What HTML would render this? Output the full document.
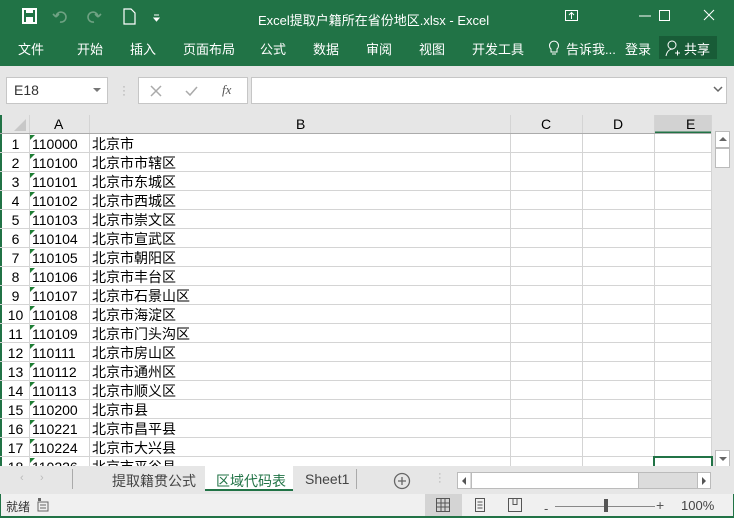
<!DOCTYPE html>
<html><head><meta charset="utf-8"><style>
*{margin:0;padding:0;box-sizing:border-box}
body{width:734px;height:518px;overflow:hidden;background:#e6e6e6;font-family:"Liberation Sans","Noto Sans CJK SC",sans-serif;position:relative}
.a{position:absolute}
.g{background:#217346}
.t{color:#fff;font-size:13px;white-space:nowrap}
.cell{position:absolute;height:19px;font-size:14px;line-height:21px;color:#000;white-space:nowrap;overflow:hidden}
</style></head><body>
<div class="a g" style="left:0;top:0;width:734px;height:66px"></div>
<svg class="a" style="left:20px;top:7px" width="150" height="20">
<rect x="3" y="2" width="13" height="14" fill="none" stroke="#fff" stroke-width="2"/><rect x="6" y="2" width="7" height="4" fill="#fff"/><rect x="6" y="10" width="7" height="6" fill="#fff"/>
<path d="M36 10a5 5 0 1 1 4 5M36 10l-3-3M36 10l3-3" stroke="#6fa283" stroke-width="1.6" fill="none"/>
<path d="M78 10a5 5 0 1 0-4 5M78 10l3-3M78 10l-3-3" stroke="#6fa283" stroke-width="1.6" fill="none"/>
<path d="M104 2h7l4 4v11h-11z" fill="none" stroke="#fff" stroke-width="1.2"/>
<path d="M134 8h5M134 11l2.5 3 2.5-3z" stroke="#fff" fill="#fff"/>
</svg>
<div class="a t" style="left:258px;top:10px">Excel提取户籍所在省份地区.xlsx - Excel</div>
<svg class="a" style="left:560px;top:6px" width="174" height="22" stroke="#fff" fill="none">
<rect x="5.5" y="4.5" width="12" height="10"/><path d="M11.5 13V7M9 9l2.5-2.5L14 9"/>
<path d="M79 10h12"/><rect x="99.5" y="4.5" width="10" height="10"/><path d="M144 4l10 10M154 4l-10 10"/>
</svg>
<div class="a t" style="left:18px;top:39px">文件</div>
<div class="a t" style="left:77px;top:39px">开始</div>
<div class="a t" style="left:130px;top:39px">插入</div>
<div class="a t" style="left:183px;top:39px">页面布局</div>
<div class="a t" style="left:260px;top:39px">公式</div>
<div class="a t" style="left:313px;top:39px">数据</div>
<div class="a t" style="left:366px;top:39px">审阅</div>
<div class="a t" style="left:419px;top:39px">视图</div>
<div class="a t" style="left:472px;top:39px">开发工具</div>
<svg class="a" style="left:548px;top:38px" width="12" height="18" stroke="#fff" fill="none"><path d="M3 11a4.5 4.5 0 1 1 6 0v3H3z"/><path d="M4 16h4"/></svg>
<div class="a t" style="left:566px;top:39px">告诉我...</div>
<div class="a t" style="left:625px;top:39px">登录</div>
<div class="a" style="left:659px;top:36px;width:58px;height:23px;background:#185c37"></div>
<svg class="a" style="left:665px;top:39px" width="16" height="18" stroke="#fff" fill="none"><circle cx="7" cy="6" r="4"/><path d="M1 17c1-5 4-7 7-7M10 14h5M12.5 11.5v5"/></svg>
<div class="a t" style="left:684px;top:39px">共享</div>
<div class="a" style="left:6px;top:77px;width:102px;height:27px;background:#fff;border:1px solid #c6c6c6"></div>
<div class="a" style="left:14px;top:82px;font-size:14px;color:#333">E18</div>
<svg class="a" style="left:92px;top:86px" width="10" height="8"><path d="M1 2h8l-4 4z" fill="#777"/></svg>
<div class="a" style="left:122px;top:84px;color:#aaa;font-size:12px;line-height:4px">·<br>·<br>·</div>
<div class="a" style="left:138px;top:77px;width:110px;height:27px;background:#fff;border:1px solid #c6c6c6"></div>
<svg class="a" style="left:148px;top:83px" width="100" height="16" fill="none" stroke="#aaa" stroke-width="1.5"><path d="M3 3l10 10M13 3L3 13M38 8l4 4 7-8"/></svg>
<div class="a" style="left:222px;top:82px;font-family:'Liberation Serif',serif;font-style:italic;font-size:13px;color:#555">fx</div>
<div class="a" style="left:251px;top:77px;width:476px;height:27px;background:#fff;border:1px solid #c6c6c6"></div>
<svg class="a" style="left:713px;top:86px" width="10" height="8" fill="none" stroke="#666" stroke-width="1.5"><path d="M1 1l4 4 4-4"/></svg>
<div class="a" style="left:0;top:115px;width:2px;height:351px;background:#217346"></div>
<div class="a" style="left:2px;top:134px;width:709px;height:332px;background:#fff"></div>
<svg class="a" style="left:0;top:115px" width="734" height="351">
<path d="M14 16L26 4v12z" fill="#c8c8c8"/>
<g stroke="#d4d4d4"><path d="M29.5 0v351M89.5 0v351M510.5 0v351M582.5 0v351M654.5 0v351M711.5 0v351"/></g>
<g stroke="#d4d4d4" id="rl"></g>
<rect x="655" y="0" width="56" height="18" fill="#d2d2d2"/>
<path d="M655 17.5h56" stroke="#217346" stroke-width="2"/>
<path d="M0 18.5h711" stroke="#ababab"/>
<rect x="654" y="342" width="58" height="10" fill="none" stroke="#217346" stroke-width="2"/>
</svg>
<div id="g"></div>
<div class="a" style="left:54px;top:116px;font-size:14px">A</div>
<div class="a" style="left:296px;top:116px;font-size:14px">B</div>
<div class="a" style="left:541px;top:116px;font-size:14px">C</div>
<div class="a" style="left:613px;top:116px;font-size:14px">D</div>
<div class="a" style="left:686px;top:116px;font-size:14px">E</div>
<div class="a" style="left:715px;top:130px;width:16px;height:336px;background:#e6e6e6"></div>
<div class="a" style="left:715px;top:131px;width:15px;height:17px;background:#fff;border:1px solid #bbb"></div>
<div class="a" style="left:715px;top:148px;width:15px;height:20px;background:#fff;border:1px solid #bbb"></div>
<div class="a" style="left:715px;top:450px;width:15px;height:17px;background:#fff;border:1px solid #bbb"></div>
<svg class="a" style="left:718px;top:136px" width="10" height="6"><path d="M1 5h8L5 1z" fill="#666"/></svg>
<svg class="a" style="left:718px;top:456px" width="10" height="6"><path d="M1 1h8L5 5z" fill="#666"/></svg>
<div class="a" style="left:0;top:466px;width:734px;height:28px;background:#e6e6e6"></div>
<div class="a" style="left:20px;top:472px;color:#bbb;font-size:11px">‹</div>
<div class="a" style="left:40px;top:472px;color:#bbb;font-size:11px">›</div>
<div class="a" style="left:72px;top:469px;width:1px;height:20px;background:#aaa"></div>
<div class="a" style="left:112px;top:471px;font-size:14px;color:#444">提取籍贯公式</div>
<div class="a" style="left:205px;top:466px;width:88px;height:25px;background:#fff;border-bottom:2px solid #217346"></div>
<div class="a" style="left:216px;top:471px;font-size:14px;color:#217346">区域代码表</div>
<div class="a" style="left:305px;top:471px;font-size:14px;color:#444">Sheet1</div>
<div class="a" style="left:356px;top:469px;width:1px;height:20px;background:#aaa"></div>
<svg class="a" style="left:393px;top:472px" width="18" height="18" fill="none" stroke="#666" stroke-width="1.3"><circle cx="9" cy="9" r="7.5"/><path d="M9 5v8M5 9h8"/></svg>
<div class="a" style="left:438px;top:472px;color:#aaa;font-size:11px;line-height:4px">·<br>·<br>·</div>
<div class="a" style="left:457px;top:472px;width:254px;height:17px;background:#dcdcdc;border:1px solid #bbb"></div>
<div class="a" style="left:458px;top:473px;width:12px;height:15px;background:#fff"></div>
<div class="a" style="left:471px;top:473px;width:168px;height:15px;background:#fff;border-left:1px solid #bbb;border-right:1px solid #bbb"></div>
<div class="a" style="left:697px;top:473px;width:13px;height:15px;background:#fff;border-left:1px solid #bbb"></div>
<svg class="a" style="left:460px;top:477px" width="8" height="8"><path d="M6 0v8L2 4z" fill="#555"/></svg>
<svg class="a" style="left:700px;top:477px" width="8" height="8"><path d="M2 0v8l4-4z" fill="#555"/></svg>
<div class="a" style="left:0;top:494px;width:734px;height:24px;background:#f0f0f0"></div>
<div class="a" style="left:0;top:516px;width:734px;height:2px;background:#217346"></div>
<div class="a" style="left:0;top:494px;width:1px;height:24px;background:#217346"></div>
<div class="a" style="left:733px;top:494px;width:1px;height:24px;background:#217346"></div>
<div class="a" style="left:6px;top:498px;font-size:12px;color:#333">就绪</div>
<svg class="a" style="left:37px;top:498px" width="12" height="14" fill="#666"><rect x="1" y="0" width="3" height="3"/><rect x="1" y="4" width="10" height="9" fill="none" stroke="#666"/><path d="M3 7h6M3 10h6" stroke="#666"/></svg>
<div class="a" style="left:425px;top:494px;width:37px;height:22px;background:#d4d4d4"></div>
<svg class="a" style="left:436px;top:498px" width="14" height="14" fill="none" stroke="#555"><path d="M.5 .5h13v13H.5zM.5 5h13M.5 9h13M5 .5v13M9 .5v13"/></svg>
<svg class="a" style="left:473px;top:498px" width="14" height="14" fill="none" stroke="#555"><rect x="2.5" y=".5" width="9" height="13"/><path d="M4.5 4h5M4.5 7h5M4.5 10h5"/></svg>
<svg class="a" style="left:508px;top:498px" width="14" height="14" fill="none" stroke="#555"><path d="M.5 .5h13v13H.5zM5 .5v6h4v-6"/></svg>
<div class="a" style="left:388px;top:501px;left:544px;font-size:13px;color:#555">-</div>
<div class="a" style="left:555px;top:506px;width:100px;height:1px;background:#888"></div>
<div class="a" style="left:604px;top:499px;width:4px;height:13px;background:#555"></div>
<div class="a" style="left:656px;top:497px;font-size:14px;color:#555">+</div>
<div class="a" style="left:681px;top:498px;font-size:13px;color:#444">100%</div>
<script>
var rows=[["110000","北京市"],["110100","北京市市辖区"],["110101","北京市东城区"],["110102","北京市西城区"],["110103","北京市崇文区"],["110104","北京市宣武区"],["110105","北京市朝阳区"],["110106","北京市丰台区"],["110107","北京市石景山区"],["110108","北京市海淀区"],["110109","北京市门头沟区"],["110111","北京市房山区"],["110112","北京市通州区"],["110113","北京市顺义区"],["110200","北京市县"],["110221","北京市昌平县"],["110224","北京市大兴县"],["110226","北京市平谷县"]];
var h="",l="";
for(var i=0;i<rows.length;i++){var y=134+i*19;var hh=(i==17?'height:'+(466-y)+'px;':'');
h+='<div class="cell" style="left:2px;top:'+y+'px;width:27px;text-align:center;'+hh+'">'+(i+1)+'</div>';
h+='<div class="cell" style="left:32px;top:'+y+'px;width:57px;'+hh+'">'+rows[i][0]+'</div>';
h+='<div class="cell" style="left:92px;top:'+y+'px;width:300px;'+hh+'">'+rows[i][1]+'</div>';
h+='<div class="a" style="left:30px;top:'+(y+1)+'px;width:0;height:0;border-top:5px solid #1e7e34;border-right:5px solid transparent"></div>';
l+='<path d="M0 '+(y-115+18.5)+'h711"/>';}
document.getElementById('g').innerHTML=h;
document.getElementById('rl').innerHTML=l;
</script>
</body></html>
